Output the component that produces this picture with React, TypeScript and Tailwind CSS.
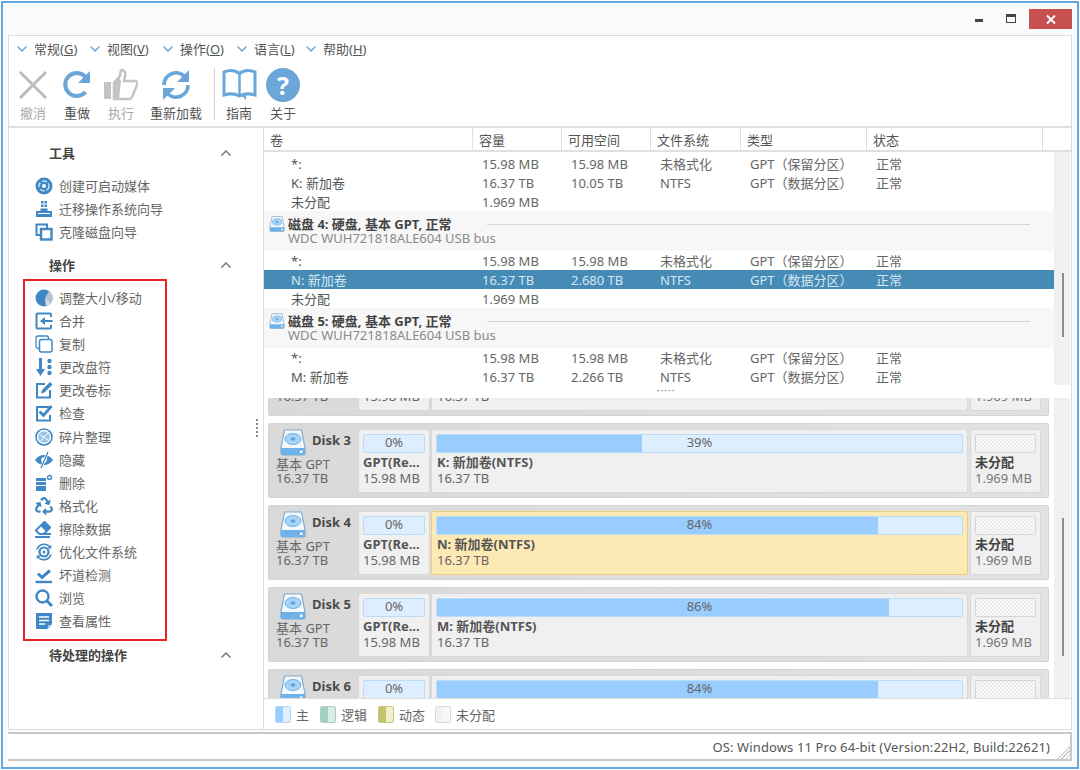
import { ReactNode } from 'react';
import { FaRecycle, FaEraser } from 'react-icons/fa';

const BLUE = '#3f87c5';

const Svg = ({ children }: { children: ReactNode }) => (
    <svg width="18" height="18" viewBox="0 0 18 18" fill="none" className="shrink-0">
        {children}
    </svg>
);

// sidebar icons, drawn by hand to follow the picture
const sideIcons: Record<string, ReactNode> = {
    disc: (
        <Svg>
            <circle cx="9" cy="9" r="8.5" fill={BLUE} />
            <circle cx="9" cy="9" r="5" fill="none" stroke="#cfe2f2" strokeWidth="1.4" strokeDasharray="5 2" />
            <circle cx="9" cy="9" r="2" fill="#fff" />
        </Svg>
    ),
    migrate: (
        <Svg>
            <path d="M6 1h2.5v2.5H6zM9.500 1H12v2.500H9.500zM6 4.500h2.500V7H6zM9.500 4.500H12V7H9.500z" fill={BLUE} />
            <path d="M5.500 8.500h7V11H17v6H1v-6h4.500z" fill={BLUE} />
            <path d="M3 13.500h12" stroke="#fff" strokeWidth="1" />
        </Svg>
    ),
    clone: (
        <Svg>
            <path d="M6 12H1.500V1.500H12V6" stroke={BLUE} strokeWidth="2" />
            <rect x="6" y="6" width="10.500" height="10.500" stroke={BLUE} strokeWidth="2.400" />
        </Svg>
    ),
    pie: (
        <Svg>
            <circle cx="9" cy="9" r="8.500" fill={BLUE} />
            <path d="M10 9l4-7a8 8 0 0 1 2.500 11z" fill="#b8c4ce" />
            <path d="M10 9l6 4a8 8 0 0 1-5 4z" fill="#d6dde3" />
        </Svg>
    ),
    merge: (
        <Svg>
            <path d="M16 5V2.500a1 1 0 0 0-1-1H2.500a1 1 0 0 0-1 1v13a1 1 0 0 0 1 1H15a1 1 0 0 0 1-1V13" stroke={BLUE} strokeWidth="2" />
            <path d="M17.500 8H10V5L5 9l5 4v-3h7.500z" fill={BLUE} />
        </Svg>
    ),
    copy: (
        <Svg>
            <path d="M4 13.500H3a2 2 0 0 1-2-2V3a2 2 0 0 1 2-2h8.500a2 2 0 0 1 2 2v1" stroke={BLUE} strokeWidth="1.300" />
            <rect x="4.500" y="4.500" width="12.500" height="12.500" rx="2" stroke={BLUE} strokeWidth="1.500" />
        </Svg>
    ),
    letter: (
        <Svg>
            <path d="M4 0h3v11h3l-4.500 7L1 11h3z" fill={BLUE} />
            <circle cx="14.500" cy="3" r="2.200" fill={BLUE} />
            <circle cx="14.500" cy="9" r="2.200" fill={BLUE} />
            <circle cx="14.500" cy="15" r="2.200" fill={BLUE} />
        </Svg>
    ),
    edit: (
        <Svg>
            <path d="M10 3H2v13.500h13V9" stroke={BLUE} strokeWidth="2" />
            <path d="M6 12.500l1-3.500 8-8 2.500 2.500-8 8z" fill={BLUE} />
        </Svg>
    ),
    check: (
        <Svg>
            <path d="M14 3H2v13.500h13V11" stroke={BLUE} strokeWidth="2" />
            <path d="M4.500 7.500l4 4 8-9.500" stroke={BLUE} strokeWidth="2.800" />
        </Svg>
    ),
    defrag: (
        <Svg>
            <circle cx="9" cy="9" r="8" stroke={BLUE} strokeWidth="1.600" />
            <circle cx="9" cy="9" r="5.800" fill="#9cc3e4" />
            <path d="M5 7l4 2 4-4M6 13l3-4 4 3" stroke="#fff" strokeWidth="1" />
        </Svg>
    ),
    hide: (
        <Svg>
            <path d="M0 9c2.500-3.500 5.500-5 9-5s6.500 1.500 9 5c-2.500 3.500-5.500 5-9 5S2.500 12.500 0 9z" fill={BLUE} />
            <circle cx="9" cy="9" r="2.800" fill="#fff" />
            <path d="M13 1L6 17" stroke="#fff" strokeWidth="2.600" />
            <path d="M13 1L6 17" stroke={BLUE} strokeWidth="1.200" />
        </Svg>
    ),
    del: (
        <Svg>
            <path d="M1 4h10v3H1zM1 8h10v3H1zM1 12h10v5H1z" fill={BLUE} />
            <circle cx="14.500" cy="3.500" r="2" stroke={BLUE} strokeWidth="1.300" />
        </Svg>
    ),
    format: <FaRecycle size={18} color={BLUE} className="shrink-0" />,
    wipe: (
        <span className="relative h-[18px] w-[18px] shrink-0">
            <FaEraser size={16} color={BLUE} />
            <span className="absolute bottom-0 left-0 h-[2px] w-[15px] bg-[#3f87c5]" />
        </span>
    ),
    optimize: (
        <Svg>
            <circle cx="9" cy="9" r="4.500" stroke={BLUE} strokeWidth="2.200" />
            <circle cx="9" cy="9" r="1.500" fill={BLUE} />
            <path d="M2 6.500a7.500 7.500 0 0 1 13-2.500M16 11.500a7.500 7.500 0 0 1-13 2.500" stroke={BLUE} strokeWidth="1.600" />
            <path d="M16.500 2l-.5 4-3.500-1zM1.500 16l.5-4 3.500 1z" fill={BLUE} />
        </Svg>
    ),
    surface: (
        <Svg>
            <path d="M3 7.500l4 4 8-7" stroke={BLUE} strokeWidth="3" />
            <path d="M0.500 16h16.500" stroke={BLUE} strokeWidth="2.400" />
        </Svg>
    ),
    search: (
        <Svg>
            <circle cx="7.500" cy="7.500" r="6" stroke={BLUE} strokeWidth="2.400" />
            <path d="M12 12l5 5" stroke={BLUE} strokeWidth="3" />
        </Svg>
    ),
    props: (
        <Svg>
            <path d="M1 1h16v11l-5 5H1z" fill={BLUE} />
            <path d="M4 5h10M4 8.500h10M4 12h6" stroke="#fff" strokeWidth="1.400" />
            <path d="M13 17l4-4h-4z" fill="#a9cbe6" />
        </Svg>
    ),
};

const tools = [
    { icon: 'disc', label: '创建可启动媒体' },
    { icon: 'migrate', label: '迁移操作系统向导' },
    { icon: 'clone', label: '克隆磁盘向导' },
];

const actions = [
    { icon: 'pie', label: '调整大小/移动' },
    { icon: 'merge', label: '合并' },
    { icon: 'copy', label: '复制' },
    { icon: 'letter', label: '更改盘符' },
    { icon: 'edit', label: '更改卷标' },
    { icon: 'check', label: '检查' },
    { icon: 'defrag', label: '碎片整理' },
    { icon: 'hide', label: '隐藏' },
    { icon: 'del', label: '删除' },
    { icon: 'format', label: '格式化' },
    { icon: 'wipe', label: '擦除数据' },
    { icon: 'optimize', label: '优化文件系统' },
    { icon: 'surface', label: '坏道检测' },
    { icon: 'search', label: '浏览' },
    { icon: 'props', label: '查看属性' },
];

const menus = [
    { name: '常规', key: 'G' },
    { name: '视图', key: 'V' },
    { name: '操作', key: 'O' },
    { name: '语言', key: 'L' },
    { name: '帮助', key: 'H' },
];

const Chevron = ({ up }: { up?: boolean }) => (
    <svg width="10" height="6" viewBox="0 0 10 6" fill="none" className="shrink-0">
        <path d={up ? 'M0.500 5.500L5 1l4.500 4.500' : 'M0.500 0.500L5 5l4.500-4.500'} stroke={up ? '#777' : '#6ea6d6'} strokeWidth="1.500" />
    </svg>
);

const DiskIcon = ({ small }: { small?: boolean }) => (
    <svg width={small ? 16 : 26} height={small ? 16 : 27} viewBox="0 0 26 27" fill="none" className="shrink-0">
        <path d="M4.500 1h17L25 19v5a2 2 0 0 1-2 2H3a2 2 0 0 1-2-2v-5z" fill="#f4f9fd" stroke="#7fa9cc" strokeWidth="1.200" />
        <path d="M1 19h24v5a2 2 0 0 1-2 2H3a2 2 0 0 1-2-2z" fill="#6fb2ea" />
        <ellipse cx="13" cy="10" rx="8" ry="5.500" fill="#a9d4f5" stroke="#6fb2ea" />
        <ellipse cx="13" cy="10" rx="2.500" ry="1.700" fill="#5fa6e0" />
        <rect x="20" y="21.500" width="2.500" height="2.500" fill="#fff" />
    </svg>
);

const ToolButton = ({ label, icon, width, muted }: { label: string; icon: ReactNode; width: string; muted?: boolean }) => (
    <div className={`flex flex-col items-center ${width}`}>
        <div className="flex h-[36px] items-center justify-center">{icon}</div>
        <span className={`flex h-[20px] items-center ${muted ? 'text-[#aaaaaa]' : 'text-[#555555]'}`}>{label}</span>
    </div>
);

const SideItem = ({ icon, label, extra }: { icon: string; label: string; extra?: string }) => (
    <div className={`flex h-[23px] items-center gap-[6px] text-[#666666] ${extra ?? ''}`}>
        <span className="flex w-[18px] justify-center">{sideIcons[icon]}</span>
        <span>{label}</span>
    </div>
);

const SideHeader = ({ title }: { title: string }) => (
    <div className="flex h-[20px] items-center justify-between pl-[40px] pr-[32px] font-bold text-[#444444]">
        <span>{title}</span>
        <Chevron up />
    </div>
);

const rowGrid = 'grid w-[790px] h-[19px] grid-cols-[209px_89px_89px_90px_126px_176px] items-start pt-[2px] leading-[17px]';

type Row = { name: string; size: string; free?: string; fs?: string; type?: string; ok?: boolean; selected?: boolean };

const VolumeRow = ({ row }: { row: Row }) => (
    <div className={`${rowGrid} ${row.selected ? 'bg-[#458bb5] text-[#d6e7f2]' : 'text-[#666666]'}`}>
        <span className={`pl-[27px] ${row.selected ? '' : 'text-[#555555]'}`}>{row.name}</span>
        <span className="pl-[9px]">{row.size}</span>
        <span className="pl-[9px]">{row.free}</span>
        <span className="pl-[9px]">{row.fs}</span>
        <span className="pl-[9px]">{row.type}</span>
        <span className="pl-[9px]">{row.ok ? '正常' : ''}</span>
    </div>
);

const reserved: Row = { name: '*:', size: '15.98 MB', free: '15.98 MB', fs: '未格式化', type: 'GPT（保留分区）', ok: true };
const data = (name: string, free: string, selected?: boolean): Row => ({
    name,
    size: '16.37 TB',
    free,
    fs: 'NTFS',
    type: 'GPT（数据分区）',
    ok: true,
    selected,
});
const unalloc: Row = { name: '未分配', size: '1.969 MB' };

const DiskGroup = ({ n }: { n: number }) => (
    <div className="flex h-[40px] w-[790px] flex-col bg-[#f7f7f7] pl-[5px]">
        <div className="flex h-[26px] shrink-0 items-center gap-[3px]">
            <DiskIcon small />
            <span className="w-[196px] font-bold leading-[15px] text-[#444444]">磁盘 {n}: 硬盘, 基本 GPT, 正常</span>
            <span className="h-[1px] w-[543px] bg-[#d5d5d5]" />
        </div>
        <span className="-mt-[5px] pl-[19px] leading-[13px] text-[#8a8a8a]">WDC WUH721818ALE604 USB bus</span>
    </div>
);

const Bar = ({ percent, w, hideText }: { percent: number; w: string; hideText?: boolean }) => (
    <div className={`relative h-[19px] ${w} overflow-hidden rounded-[2px] border border-[#b9dcf8] bg-[#ddeeff]`}>
        <div className="h-full bg-[#99ccff]" style={{ width: `${percent}%` }} />
        {!hideText && <span className="absolute inset-0 flex items-center justify-center pb-[2px] leading-[15px] text-[#666666]">{percent}%</span>}
    </div>
);

// cut: the part of the card that the scrolled pane hides, so its text isn't drawn
const DiskCard = ({ n, letter, percent, selected, cut }: { n: number; letter: string; percent: number; selected?: boolean; cut?: 'top' | 'bottom' }) => {
    const top = cut === 'top' ? 'invisible' : '';
    const bottom = cut === 'bottom' ? 'invisible' : '';
    return (
        <div className="flex h-[75px] w-[781px] shrink-0 rounded-[2px] border border-[#d4d4d4] bg-gradient-to-r from-[#d9d9d9] to-[#e2e2e2] pt-[5px]">
            <div className="flex w-[89px] shrink-0 flex-col pl-[7px]">
                <div className={`flex h-[28px] items-start gap-[6px] pl-[4px] ${top}`}>
                    <DiskIcon />
                    <span className="pt-[3px] font-bold leading-[17px] text-[#4a4a4a]">Disk {n}</span>
                </div>
                <span className={`leading-[15px] text-[#666666] ${cut ? 'invisible' : ''}`}>基本 GPT</span>
                <span className={`leading-[13px] text-[#666666] ${bottom}`}>16.37 TB</span>
            </div>
            <div className="flex h-[64px] w-[72px] shrink-0 flex-col rounded-[2px] border border-[#d8d8d8] bg-[#f0f0f0] px-[4px] pt-[4px]">
                <Bar percent={0} w="w-[62px]" hideText={cut === 'top'} />
                <span className={`mt-[1px] truncate whitespace-nowrap font-bold leading-[17px] text-[#555555] ${cut ? 'invisible' : ''}`}>GPT(Re...</span>
                <span className={`leading-[15px] text-[#666666] ${bottom}`}>15.98 MB</span>
            </div>
            <div
                className={`ml-[1px] flex h-[64px] w-[537px] shrink-0 flex-col rounded-[2px] border px-[4px] pt-[4px] ${selected ? 'border-[#eecf78] bg-[#fde9b4]' : 'border-[#d8d8d8] bg-[#f0f0f0]'}`}
            >
                <Bar percent={percent} w="w-[527px]" hideText={cut === 'top'} />
                <span className={`mt-[1px] pl-[1px] font-bold leading-[17px] text-[#555555] ${cut ? 'invisible' : ''}`}>{letter}: 新加卷(NTFS)</span>
                <span className={`pl-[1px] leading-[15px] text-[#666666] ${bottom}`}>16.37 TB</span>
            </div>
            <div className="ml-[2px] flex h-[64px] w-[71px] shrink-0 flex-col rounded-[2px] border border-[#d8d8d8] bg-[#f0f0f0] px-[4px] pt-[4px]">
                <div className="h-[19px] w-[61px] rounded-[2px] border border-[#d6d6d6] bg-[repeating-conic-gradient(#ececec_0%_25%,#f9f9f9_0%_50%)] bg-[length:4px_4px]" />
                <span className={`mt-[1px] font-bold leading-[17px] text-[#444444] ${cut ? 'invisible' : ''}`}>未分配</span>
                <span className={`leading-[15px] text-[#777777] ${bottom}`}>1.969 MB</span>
            </div>
        </div>
    );
};

const Swatch = ({ border, fill, rest }: { border: string; fill: string; rest: string }) => (
    <div className={`flex h-[17px] w-[16px] overflow-hidden rounded-[2px] border ${border} ${rest}`}>
        <div className={`h-full w-[7px] ${fill}`} />
    </div>
);

export default function App() {
    return (
        <div className="h-[770px] w-[1080px] overflow-hidden bg-white pl-[1px] pt-[1px] font-['Noto_Sans','Noto_Sans_CJK_SC',sans-serif] text-[13px] leading-[18px]">
            <div className="flex h-[768px] w-[1078px] flex-col border-2 border-[#62a8e0] bg-[#fbfbfb]">
                {/* Title bar */}
                <div className="flex h-[32px] shrink-0 items-start justify-end pr-[5px] pt-[6px]">
                    <div className="mr-[23px] mt-[10px] h-[3px] w-[8px] bg-[#444444]" />
                    <div className="mr-[13px] mt-[5px] h-[9px] w-[10px] border border-t-[3px] border-[#444444]" />
                    <div className="flex h-[20px] w-[43px] items-center justify-center bg-[#c75050]">
                        <svg width="10" height="9" viewBox="0 0 10 9">
                            <path d="M1 0.500l8 8M9 0.500l-8 8" stroke="#fff" strokeWidth="2" />
                        </svg>
                    </div>
                </div>

                {/* Main frame */}
                <div className="mx-[5px] flex h-[695px] shrink-0 flex-col border border-[#dcdcdc] bg-white">
                    {/* Menu */}
                    <div className="flex h-[27px] shrink-0 items-center pb-[2px] pl-[8px] text-[#555555]">
                        {menus.map((m, i) => (
                            <div
                                key={m.key}
                                className={`flex items-center gap-[7px] ${i === 2 ? 'w-[74px]' : i === 3 ? 'w-[69px]' : 'w-[73px]'}`}
                            >
                                <Chevron />
                                <span className="whitespace-nowrap">
                                    {m.name}(<u>{m.key}</u>)
                                </span>
                            </div>
                        ))}
                    </div>

                    {/* Toolbar */}
                    <div className="flex h-[65px] shrink-0 border-b-2 border-[#e0e0e0] pl-[2px] pt-[4px]">
                        <ToolButton
                            width="w-[44px]"
                            muted
                            label="撤消"
                            icon={
                                <svg width="30" height="30" viewBox="0 0 30 30">
                                    <path d="M2 2l26 26M28 2L2 28" stroke="#bcbcbc" strokeWidth="3" />
                                </svg>
                            }
                        />
                        <ToolButton
                            width="w-[44px]"
                            label="重做"
                            icon={
                                <svg width="30" height="30" viewBox="0 0 30 30" fill="none">
                                    <path d="M23.500 22a11.500 11.500 0 1 1 0-15" stroke="#6aa6d8" strokeWidth="4" />
                                    <path d="M28 1v12H16z" fill="#6aa6d8" />
                                </svg>
                            }
                        />
                        <ToolButton
                            width="w-[44px]"
                            muted
                            label="执行"
                            icon={
                                <svg width="34" height="32" viewBox="0 0 34 32" fill="none">
                                    <rect x="0" y="13" width="7" height="17" fill="#c4c4c4" />
                                    <path d="M10 14l6-7 1-6c4 0 5 3 4 6l-1 5h11c2 0 3 2 2 4l-5 12c-1 2-2 2-3 2H10z" fill="#fff" stroke="#c4c4c4" strokeWidth="2.500" />
                                    <path d="M9 13l6-6 2 5-2 18H9z" fill="#c4c4c4" />
                                </svg>
                            }
                        />
                        <ToolButton
                            width="w-[66px]"
                            label="重新加载"
                            icon={
                                <svg width="32" height="32" viewBox="0 0 32 32" fill="none">
                                    <path d="M4 16A12 12 0 0 1 24 7M28 16A12 12 0 0 1 8 25" stroke="#6aa6d8" strokeWidth="3.600" />
                                    <path d="M29 1v12H17zM3 31V19h12z" fill="#6aa6d8" />
                                </svg>
                            }
                        />
                        <div className="ml-[5px] mt-[1px] h-[52px] w-[1px] bg-[#d2d2d2]" />
                        <div className="ml-[2px]" />
                        <ToolButton
                            width="w-[44px]"
                            label="指南"
                            icon={
                                <svg width="35" height="32" viewBox="0 0 35 32" fill="none">
                                    <path d="M2 3c5-2 11-2 15.500 1.500C22 1 28 1 33 3v23c-5-1.500-11-1.500-15.500 1C13 24.500 7 24.500 2 26z" stroke="#6aa6d8" strokeWidth="3" />
                                    <path d="M17.500 4v23" stroke="#6aa6d8" strokeWidth="2.500" />
                                    <path d="M20 27l4 0 0 4-2-2z" fill="#6aa6d8" />
                                </svg>
                            }
                        />
                        <ToolButton
                            width="w-[44px]"
                            label="关于"
                            icon={
                                <span className="flex h-[34px] w-[34px] items-center justify-center rounded-full bg-[#6aa6d8] text-[25px] font-bold leading-none text-white">
                                    ?
                                </span>
                            }
                        />
                    </div>

                    {/* Body */}
                    <div className="flex min-h-0 flex-1">
                        {/* Sidebar */}
                        <div className="relative w-[255px] shrink-0 border-r border-[#dcdcdc] pt-[15px]">
                            <SideHeader title="工具" />
                            <div className="mt-[11px] pl-[26px]">
                                {tools.map((t) => (
                                    <SideItem key={t.label} icon={t.icon} label={t.label} />
                                ))}
                            </div>
                            <div className="mt-[12px]">
                                <SideHeader title="操作" />
                            </div>
                            <div className="ml-[14px] mt-[4px] h-[362px] w-[144px] border-2 border-[#e8202a] pl-[10px] pt-[5px]">
                                {actions.map((a, i) => (
                                    <SideItem key={a.label} icon={a.icon} label={a.label} extra={i === 6 ? 'mt-[1px]' : ''} />
                                ))}
                            </div>
                            <div className="mt-[4px]">
                                <SideHeader title="待处理的操作" />
                            </div>
                            <div className="absolute left-[247px] top-[291px] h-[20px] w-[2px] bg-[repeating-linear-gradient(#888888_0_2px,transparent_2px_4px)]" />
                        </div>

                        {/* Right panel */}
                        <div className="flex min-w-0 flex-1 flex-col">
                            {/* Column headers */}
                            <div className="flex h-[24px] shrink-0 border-b-2 border-[#e0e0e0] text-[#555555]">
                                <div className="flex w-[209px] items-center border-r border-[#dedede] pl-[6px] pt-[2px]">卷</div>
                                <div className="flex w-[89px] items-center border-r border-[#dedede] pl-[6px] pt-[2px]">容量</div>
                                <div className="flex w-[89px] items-center border-r border-[#dedede] pl-[6px] pt-[2px]">可用空间</div>
                                <div className="flex w-[90px] items-center border-r border-[#dedede] pl-[6px] pt-[2px]">文件系统</div>
                                <div className="flex w-[126px] items-center border-r border-[#dedede] pl-[6px] pt-[2px]">类型</div>
                                <div className="flex w-[176px] items-center border-r border-[#dedede] pl-[6px] pt-[2px]">状态</div>
                            </div>

                            {/* Volume list */}
                            <div className="flex h-[246px] shrink-0 overflow-hidden">
                                <div className="w-[790px] shrink-0 pt-[2px]">
                                    <VolumeRow row={reserved} />
                                    <VolumeRow row={data('K: 新加卷', '10.05 TB')} />
                                    <VolumeRow row={unalloc} />
                                    <DiskGroup n={4} />
                                    <VolumeRow row={reserved} />
                                    <VolumeRow row={data('N: 新加卷', '2.680 TB', true)} />
                                    <VolumeRow row={unalloc} />
                                    <DiskGroup n={5} />
                                    <VolumeRow row={reserved} />
                                    <VolumeRow row={data('M: 新加卷', '2.266 TB')} />
                                    <div className="ml-[393px] h-[12px] text-[10px] leading-[9px] tracking-[1px] text-[#777777]">·····</div>
                                </div>
                                <div className="flex h-[233px] w-[16px] shrink-0 bg-[#f0f0f0] pl-[8px] pt-[121px]">
                                    <div className="h-[64px] w-[2px] bg-[#8c8c8c]" />
                                </div>
                            </div>

                            {/* Disk map */}
                            <div className="flex min-h-0 flex-1 overflow-hidden">
                                <div className="-mt-[57px] flex w-[790px] shrink-0 flex-col gap-[7px] pl-[4px]">
                                    <DiskCard n={2} letter="J" percent={39} cut="top" />
                                    <DiskCard n={3} letter="K" percent={39} />
                                    <DiskCard n={4} letter="N" percent={84} selected />
                                    <DiskCard n={5} letter="M" percent={86} />
                                    <DiskCard n={6} letter="O" percent={84} cut="bottom" />
                                </div>
                                <div className="w-[16px] shrink-0 bg-[#f0f0f0] pl-[8px] pt-[120px]">
                                    <div className="h-[138px] w-[2px] bg-[#8c8c8c]" />
                                </div>
                            </div>

                            {/* Legend */}
                            <div className="flex h-[31px] shrink-0 items-center border-t border-[#dddddd] pl-[11px] text-[#666666]">
                                <Swatch border="border-[#b4d8f6]" fill="bg-[#99ccff]" rest="bg-[#ddeeff]" />
                                <span className="ml-[5px] w-[24px] pt-[1px]">主</span>
                                <Swatch border="border-[#a8d0c4]" fill="bg-[#a3cfc2]" rest="bg-[#dcece6]" />
                                <span className="ml-[5px] w-[37px] pt-[1px]">逻辑</span>
                                <Swatch border="border-[#c8c878]" fill="bg-[#c4c46c]" rest="bg-[#f0f0d0]" />
                                <span className="ml-[5px] w-[36px] pt-[1px]">动态</span>
                                <Swatch border="border-[#d8d8d8]" fill="bg-[#f2f2f2]" rest="bg-[#f8f8f8]" />
                                <span className="ml-[5px] pt-[1px]">未分配</span>
                            </div>
                        </div>
                    </div>
                </div>

                {/* Status bar */}
                <div className="relative mx-[5px] mt-[2px] flex h-[29px] shrink-0 items-center justify-end border-y-2 border-r-2 border-[#c9c9c9] bg-white pr-[20px] tracking-[0.11px] text-[#555555]">
                    OS: Windows 11 Pro 64-bit (Version:22H2, Build:22621)
                    <div className="absolute bottom-0 right-0 h-[13px] w-[13px] bg-[repeating-linear-gradient(135deg,#c4c4c4_0_1px,transparent_1px_3px)] [clip-path:polygon(100%_0,100%_100%,0_100%)]" />
                </div>
            </div>
        </div>
    );
}
